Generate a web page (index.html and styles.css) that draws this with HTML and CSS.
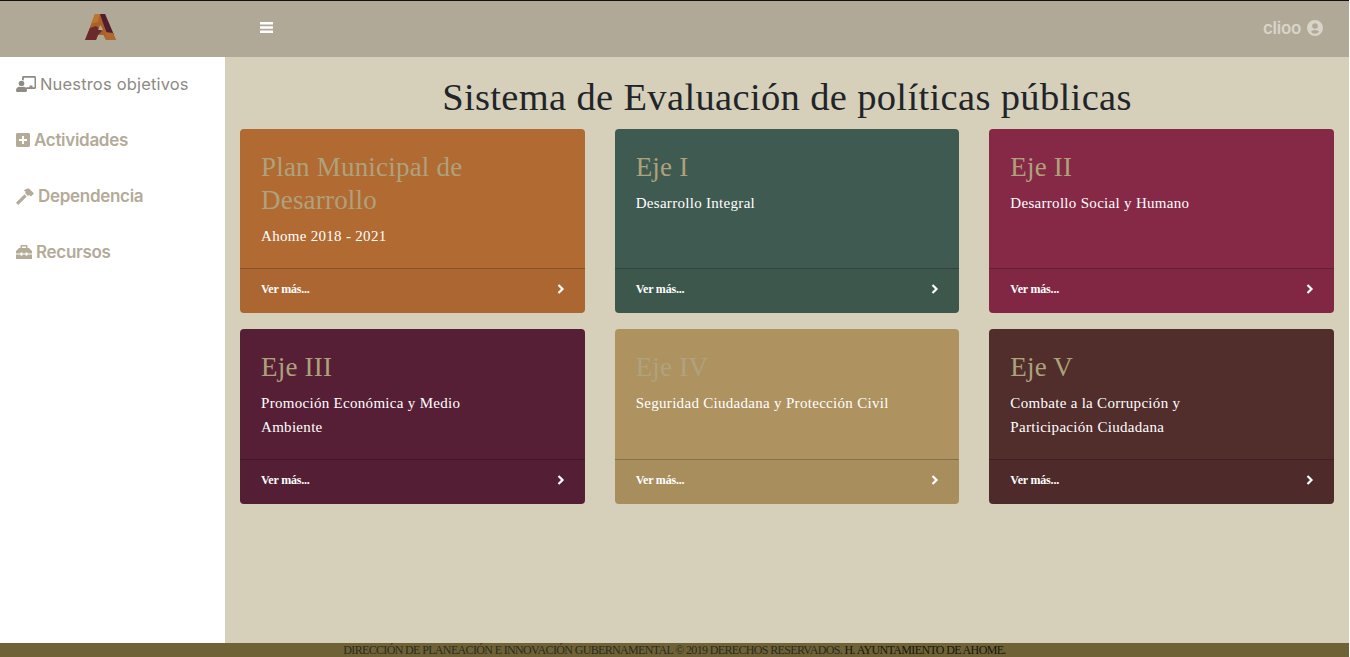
FILE: index.html
```html
<!DOCTYPE html>
<html lang="es">
<head>
<meta charset="utf-8">
<title>Sistema de Evaluación de políticas públicas</title>
<link rel="stylesheet" href="styles.css">
</head>
<body>
<div class="page">
  <header class="topbar">
    <div class="brand">
      <svg class="logo" width="32" height="27" viewBox="0 0 32 27">
        <polygon points="10,0 20,0 31,26 21,26 18.500,21 13,21 11,26 0,26" fill="#a9602a"/>
        <polygon points="15,0 20,0 29,21 23,22 18,9" fill="#4f1f30"/>
        <polygon points="0,26 11,26 13,21 17,17 11,12 5,14" fill="#6a2a2c"/>
        <polygon points="10,0 15,0 13,8 6,10" fill="#bd7430"/>
        <polygon points="21,26 31,26 28,19 20,18" fill="#b0682c"/>
        <polygon points="15.500,11 18,16 13,16" fill="#b0a997"/>
      </svg>
    </div>
    <button class="menu-btn" aria-label="Menú">
      <svg width="13" height="13" viewBox="0 0 13 13"><path class="white" d="M0 1h13v2.400H0zM0 5.300h13v2.400H0zM0 9.600h13V12H0z"/></svg>
    </button>
    <div class="user">
      <span>clioo</span>
      <svg width="16" height="16" viewBox="0 0 16 16"><path class="pale" fill-rule="evenodd" d="M8 0a8 8 0 1 1 0 16A8 8 0 0 1 8 0zm0 3.200a2.800 2.800 0 1 0 0 5.600 2.800 2.800 0 0 0 0-5.600zM8 10c-1.900 0-3.300.7-4 1.800 1 1.200 2.400 1.900 4 1.900s3-.7 4-1.900C11.300 10.700 9.900 10 8 10z"/></svg>
    </div>
  </header>
  <div class="middle">
    <nav class="sidebar">
      <a class="nav-item">
        <svg class="ic" width="20" height="16" viewBox="0 0 20 16"><path fill="#8e8a84" d="M6 1.500C6 .7 6.700 0 7.500 0h11c.8 0 1.500.7 1.500 1.500v10c0 .8-.7 1.500-1.500 1.500H11v-1.800h2.500V9.500h3v1.700h2V1.800h-10.700V4.500C7.300 4.200 6.700 4 6 4z"/><circle fill="#8e8a84" cx="5.500" cy="7.500" r="2.800"/><path fill="#8e8a84" d="M0 14.500C0 12 1.800 10.800 3.500 10.800c1 .4 3 .4 4 0 .8 0 1.500.2 2.200.7H12v1.500H10.700c.2.500.3 1 .3 1.500 0 .8-.6 1.500-1.500 1.500h-8C.6 16 0 15.300 0 14.500z"/></svg>
        <span class="objetivos">Nuestros objetivos</span>
      </a>
      <a class="nav-item">
        <svg class="ic" width="14" height="14" viewBox="0 0 14 14"><path class="tan" fill-rule="evenodd" d="M1.500 0h11C13.300 0 14 .7 14 1.500v11c0 .8-.7 1.500-1.500 1.500h-11C.7 14 0 13.300 0 12.500v-11C0 .7.700 0 1.500 0zM6 3v3H3v2h3v3h2V8h3V6H8V3z"/></svg>
        <span>Actividades</span>
      </a>
      <a class="nav-item">
        <svg class="ic" width="18" height="17" viewBox="0 0 18 17"><path class="tan" d="M0 14.800 8.500 6.300 10.700 8.500 2.200 17zM7.500 3.200C9 1 11.500 0 13 .6l5 5-3 3-1.300-1.300-2 .5-2.500-2.500.3-1.800C8.700 3 8 3 7.500 3.200z"/></svg>
        <span>Dependencia</span>
      </a>
      <a class="nav-item">
        <svg class="ic" width="16" height="14" viewBox="0 0 16 14"><path class="tan" fill-rule="evenodd" d="M4.500 3V1.200C4.500.5 5 0 5.700 0h4.600c.7 0 1.200.5 1.200 1.200V3H13l3 3v2.500h-4.500V7.500h-2v1h-3v-1h-2v1H0V6l3-3zM6 1.500V3h4V1.500zM0 9.500h4.500v1h2v-1h3v1h2v-1H16V14H0z"/></svg>
        <span>Recursos</span>
      </a>
    </nav>
    <main class="content">
      <h1 class="title">Sistema de Evaluación de políticas públicas</h1>
      <div class="cards">
        <article class="card c-orange">
          <div class="card-body"><h2>Plan Municipal de Desarrollo</h2><p>Ahome 2018 - 2021</p></div>
          <a class="card-foot"><span>Ver más...</span><svg class="chev" width="8" height="10" viewBox="0 0 8 10"><path d="M1.500 1 5.500 5 1.500 9" /></svg></a>
        </article>
        <article class="card c-green">
          <div class="card-body"><h2>Eje I</h2><p>Desarrollo Integral</p></div>
          <a class="card-foot"><span>Ver más...</span><svg class="chev" width="8" height="10" viewBox="0 0 8 10"><path d="M1.500 1 5.500 5 1.500 9" /></svg></a>
        </article>
        <article class="card c-wine">
          <div class="card-body"><h2>Eje II</h2><p>Desarrollo Social y Humano</p></div>
          <a class="card-foot"><span>Ver más...</span><svg class="chev" width="8" height="10" viewBox="0 0 8 10"><path d="M1.500 1 5.500 5 1.500 9" /></svg></a>
        </article>
        <article class="card c-plum">
          <div class="card-body"><h2>Eje III</h2><p>Promoción Económica y Medio Ambiente</p></div>
          <a class="card-foot"><span>Ver más...</span><svg class="chev" width="8" height="10" viewBox="0 0 8 10"><path d="M1.500 1 5.500 5 1.500 9" /></svg></a>
        </article>
        <article class="card c-gold">
          <div class="card-body"><h2>Eje IV</h2><p>Seguridad Ciudadana y Protección Civil</p></div>
          <a class="card-foot"><span>Ver más...</span><svg class="chev" width="8" height="10" viewBox="0 0 8 10"><path d="M1.500 1 5.500 5 1.500 9" /></svg></a>
        </article>
        <article class="card c-brown">
          <div class="card-body"><h2>Eje V</h2><p>Combate a la Corrupción y Participación Ciudadana</p></div>
          <a class="card-foot"><span>Ver más...</span><svg class="chev" width="8" height="10" viewBox="0 0 8 10"><path d="M1.500 1 5.500 5 1.500 9" /></svg></a>
        </article>
      </div>
    </main>
  </div>
  <footer class="footer">DIRECCIÓN DE PLANEACIÓN E INNOVACIÓN GUBERNAMENTAL © 2019 DERECHOS RESERVADOS. <span class="footer-strong">H. AYUNTAMIENTO DE AHOME.</span></footer>
</div>
</body>
</html>
```
FILE: styles.css
```css
* { box-sizing: border-box; }
html, body { margin: 0; height: 100%; overflow: hidden; background: #fff; }
.page { display: flex; flex-direction: column; height: 657px; width: 1349px; }
.white { fill: #fff; }
.pale { fill: #d8d4c8; }
.tan { fill: #b3ab98; }

.topbar { height: 57px; flex: none; display: flex; align-items: center; padding-bottom: 3px; background: #b0a997; border-top: 1px solid #111; }
.brand { width: 225px; display: flex; justify-content: center; padding-right: 24px; }
.logo { display: block; }
.menu-btn { display: flex; padding: 0; margin-left: 35px; border: 0; background: none; }
.user { margin-left: auto; margin-right: 26px; display: flex; align-items: center; gap: 6px; color: #d8d4c8; font: 600 17px "Inter", sans-serif; letter-spacing: -0.3px; }

.middle { flex: 1; display: flex; min-height: 0; }
.sidebar { width: 225px; flex: none; background: #fff; padding: 0 0 0 16px; display: flex; flex-direction: column; }
.nav-item { height: 56px; padding-bottom: 2px; display: flex; align-items: center; gap: 4px; color: #b3ab98; font: 600 17px "Inter", sans-serif; letter-spacing: -0.3px; }
.nav-item .ic { flex: none; }
.objetivos { color: #8e8a84; font-weight: 400; letter-spacing: 0.17px; font-size: 16.500px; }

.content { flex: 1; background: #d6d0ba; padding: 0 15px; }
.title { margin: 17px 0 9px; height: 46px; text-align: center; font: 400 38.500px/46px "Liberation Serif", serif; letter-spacing: 0.350px; color: #212529; }
.cards { display: grid; grid-template-columns: repeat(3, 1fr); gap: 16px 30px; }
.card { display: flex; flex-direction: column; border-radius: 4px; color: #fff; overflow: hidden; }
.card-body { flex: 1; padding: 22px 21px 16px; }
.card h2 { margin: 0 48px 7px 0; font: 400 27px/33px "Liberation Serif", serif; letter-spacing: 0.200px; color: #ada27b; }
.card p { margin: 0 46px 0 0; font: 400 15px/24px "Liberation Serif", serif; letter-spacing: 0.300px; }
.card-foot { height: 45px; flex: none; display: flex; justify-content: space-between; align-items: center; padding: 0 20px 3px 21px; border-top: 1px solid rgba(0,0,0,.2); background: rgba(0,0,0,.03); font: 700 12px "Liberation Serif", serif; letter-spacing: -0.200px; }
.chev { fill: none; stroke: #fff; stroke-width: 2.200; margin-top: -1px; }
.c-orange { background: #b26a33; min-height: 184px; }
.c-green { background: #3f5a50; }
.c-wine { background: #862946; }
.c-plum { background: #571f36; min-height: 175px; }
.c-gold { background: #ae9260; }
.c-gold h2 { color: #b0a27f; }
.c-brown { background: #512d2c; }

.footer { height: 14px; flex: none; background: #6f6236; color: #2b2a20; text-align: center; font: 400 12px/14px "Liberation Serif", serif; letter-spacing: -0.650px; white-space: nowrap; overflow: hidden; }
.footer-strong { color: #17150c; }
```
